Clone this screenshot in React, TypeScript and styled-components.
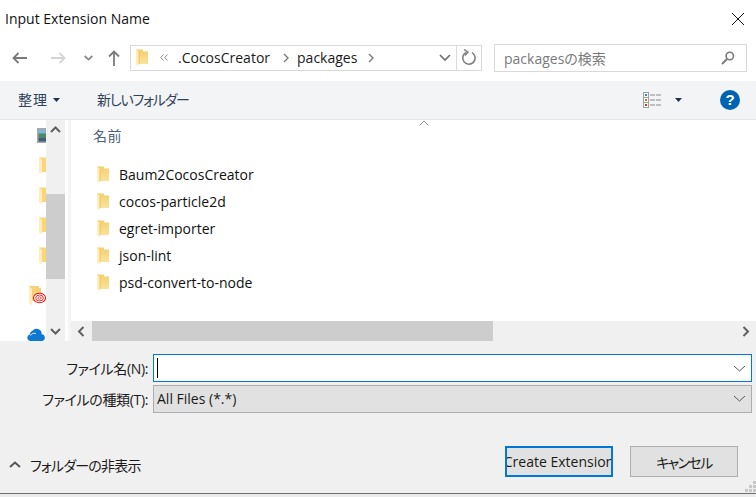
import React from "react";
import styled, { createGlobalStyle } from "styled-components";

const Global = createGlobalStyle`
  html, body { margin: 0; padding: 0; background: #fff; overflow: hidden; }
  * { box-sizing: border-box; }
  body { font-family: "Open Sans", "Noto Sans CJK JP", sans-serif; font-size: 14px; color: #1a1a1a; font-feature-settings: "palt"; }
`;

const Dialog = styled.div`
  width: 756px; height: 497px; display: flex; flex-direction: column; overflow: hidden; background: #fff; position: relative;
`;
const TitleBar = styled.div`
  height: 38px; flex: none; display: flex; align-items: center; justify-content: space-between; padding: 0 12px 0 5px;
`;
const Title = styled.span`
  font-size: 14px; color: #111; line-height: 38px;
`;
const NavRow = styled.div`
  height: 43px; flex: none; display: flex; align-items: center; padding: 0 9px 4px 12px;
`;
const NavIcon = styled.svg<{ $gap: number }>`
  flex: none; margin-right: ${(p) => p.$gap}px; display: block;
`;
const AddressBox = styled.div`
  width: 352px; height: 26px; flex: none; border: 1px solid #d9d9d9; display: flex; align-items: center; padding-left: 5px; margin-right: 12px;
`;
const Crumb = styled.span<{ $left: number }>`
  margin-left: ${(p) => p.$left}px; font-size: 14px; color: #1a1a1a; white-space: nowrap;
`;
const CrumbIcon = styled.svg<{ $left: number }>`
  margin-left: ${(p) => p.$left}px; flex: none; display: block;
`;
const Spacer = styled.div`
  flex: 1;
`;
const Divider = styled.div`
  width: 1px; align-self: stretch; background: #d9d9d9; margin: 0 4px 0 5px;
`;
const SearchBox = styled.div`
  width: 253px; height: 28px; flex: none; border: 1px solid #d9d9d9; display: flex; align-items: center; justify-content: space-between; padding: 0 11px 0 9px;
`;
const SearchText = styled.span`
  font-size: 14px; color: #7a7a7a;
`;
const Toolbar = styled.div`
  height: 39px; flex: none; background: #f3f4f6; border-bottom: 1px solid #e5e5e5; display: flex; align-items: center; padding: 0 16px 0 18px;
`;
const ToolLabel = styled.span<{ $right: number; $track: number }>`
  font-size: 14px; color: #2f4258; margin-right: ${(p) => p.$right}px; letter-spacing: ${(p) => p.$track}px; white-space: nowrap; padding-bottom: 2px;
`;
const HelpBadge = styled.span`
  width: 20px; height: 20px; border-radius: 50%; background: #0063b1; color: #fff; font-family: "Liberation Sans", sans-serif; font-weight: 700; font-size: 15px; line-height: 20px; text-align: center; flex: none;
`;
const Main = styled.div`
  flex: none; height: 221px; display: flex; position: relative;
`;
const Tree = styled.div`
  width: 46px; flex: none; overflow: hidden; display: flex; flex-direction: column; align-items: flex-end;
`;
const TreeRow = styled.div<{ $top?: number }>`
  height: 30px; flex: none; display: flex; align-items: center; margin-top: ${(p) => p.$top ?? 0}px; width: 100%; overflow: hidden;
`;
const VScroll = styled.div`
  width: 19px; flex: none; background: #f0f0f0; display: flex; flex-direction: column;
`;
const ScrollBtn = styled.div`
  height: 20px; flex: none; display: flex; align-items: center; justify-content: center;
`;
const VTrack = styled.div`
  flex: 1; padding-top: 54px;
`;
const VThumb = styled.div`
  height: 85px; background: #cdcdcd;
`;
const Splitter = styled.div`
  width: 6px; flex: none; background: #fff; border-right: 3px solid #f5f5f5;
`;
const ListPane = styled.div`
  flex: 1; display: flex; flex-direction: column; min-width: 0;
`;
const ListBody = styled.div`
  flex: 1; padding: 6px 0 0 22px;
`;
const ColumnHead = styled.div`
  font-size: 14px; color: #4c607a; height: 22px; line-height: 20px; margin-bottom: 13px; letter-spacing: 0.5px;
`;
const FileRow = styled.div`
  height: 27px; display: flex; align-items: center; padding-left: 4px; gap: 10px; font-size: 14px; color: #111;
`;
const HScroll = styled.div`
  height: 20px; flex: none; background: #f0f0f0; display: flex; align-items: center;
`;
const HBtn = styled.div`
  width: 21px; height: 20px; flex: none; display: flex; align-items: center; justify-content: center;
`;
const HThumb = styled.div`
  width: 401px; height: 20px; flex: none; background: #cdcdcd;
`;
const SortCaret = styled.svg`
  position: absolute; left: 419px; top: 0; display: block;
`;
const Footer = styled.div`
  height: 153px; flex: none; background: #f0f0f0; border-bottom: 1px solid #6d6d6d; padding: 13px 4px 0 0; display: flex; flex-direction: column; position: relative;
`;
const FieldRow = styled.div`
  height: 28px; display: flex; align-items: center; margin-bottom: 3px;
`;
const FieldLabel = styled.span`
  width: 148px; text-align: right; font-size: 14px; color: #1a1a1a; white-space: nowrap; margin-right: 5px; flex: none; padding-bottom: 1px; letter-spacing: -0.35px;
`;
const NameInput = styled.div`
  flex: 1; height: 28px; background: #fff; border: 1px solid #0078d7; display: flex; align-items: center; justify-content: space-between; padding: 0 5px 0 3px;
`;
const Caret = styled.div`
  width: 1px; height: 20px; background: #000;
`;
const TypeSelect = styled.div`
  flex: 1; height: 28px; background: #e1e1e1; border: 1px solid #adadad; display: flex; align-items: center; justify-content: space-between; padding: 0 5px 1px 3px; font-size: 14px;
`;
const ActionRow = styled.div`
  margin-top: 30px; display: flex; align-items: center; padding: 0 14px 0 9px;
`;
const Toggle = styled.div`
  display: flex; align-items: center; gap: 9px; font-size: 14px; padding-top: 6px; margin-right: auto; letter-spacing: -0.8px;
`;
const DlgButton = styled.div<{ $primary?: boolean; $track?: number }>`
  width: 108px; height: 31px; background: #e1e1e1; border: ${(p) => (p.$primary ? "2px solid #0078d7" : "1px solid #adadad")}; margin-left: 17px; overflow: hidden; display: flex; align-items: center; justify-content: center; white-space: nowrap; font-size: 14px; color: #1a1a1a; letter-spacing: ${(p) => p.$track ?? 0}px;
`;
const Grip = styled.svg`
  position: absolute; right: 0; bottom: 1px; display: block;
`;
const BottomEdge = styled.div`
  flex: 1; background: #ececec;
`;

const Folder = ({ w = 12, h = 17 }: { w?: number; h?: number }) => (
  <svg width={w} height={h} viewBox="0 0 12 17" style={{ flex: "none", display: "block" }}>
    <defs>
      <linearGradient id="fbody" x1="0" y1="0" x2="0" y2="1">
        <stop offset="0" stopColor="#f5cf6a" />
        <stop offset="1" stopColor="#fbe5a0" />
      </linearGradient>
    </defs>
    <path d="M0 0.5H7V2.5H12V15H3V17L0 15Z" fill="url(#fbody)" />
    <path d="M0 0.5L3 3V17L0 15Z" fill="#ffeebc" />
    <path d="M3 3V15" stroke="#e6bb58" strokeWidth="0.8" />
  </svg>
);

const SideFolder = () => (
  <svg width="7" height="17" viewBox="0 0 7 17" style={{ marginLeft: 39, flex: "none", display: "block" }}>
    <path d="M0 0.5H7V15H3V17L0 15Z" fill="#f8d778" />
    <path d="M0 0.5L3 3V17L0 15Z" fill="#ffeebc" />
  </svg>
);

const Chevron = ({ dir, color = "#606060" }: { dir: "up" | "down" | "left" | "right"; color?: string }) => {
  const d = { up: "M1 7L5.5 2.5L10 7", down: "M1 3L5.5 7.5L10 3", left: "M7.5 1L3 5.5L7.5 10", right: "M3.5 1L8 5.5L3.5 10" }[dir];
  return (
    <svg width="11" height="11" viewBox="0 0 11 11" style={{ display: "block" }}>
      <path d={d} fill="none" stroke={color} strokeWidth="2" />
    </svg>
  );
};

const ThinChevron = () => (
  <svg width="13" height="7" viewBox="0 0 13 7" style={{ display: "block" }}>
    <path d="M1 1L6.5 6L12 1" fill="none" stroke="#555" strokeWidth="1" />
  </svg>
);

const names = ["Baum2CocosCreator", "cocos-particle2d", "egret-importer", "json-lint", "psd-convert-to-node"];

export default function App() {
  return (
    <Dialog>
      <Global />
      <TitleBar>
        <Title>Input Extension Name</Title>
        <svg width="12" height="12" viewBox="0 0 12 12" style={{ display: "block" }}>
          <path d="M0 0L12 12M12 0L0 12" stroke="#111" strokeWidth="1" />
        </svg>
      </TitleBar>
      <NavRow>
        <NavIcon $gap={24} width="15" height="12" viewBox="0 0 15 12">
          <path d="M15 6H1.5M6.5 1L1.5 6L6.5 11" fill="none" stroke="#7a7a7a" strokeWidth="1.8" />
        </NavIcon>
        <NavIcon $gap={18} width="15" height="12" viewBox="0 0 15 12">
          <path d="M0 6H13.5M8.5 1L13.5 6L8.5 11" fill="none" stroke="#d4d4d4" strokeWidth="1.8" />
        </NavIcon>
        <NavIcon $gap={15} width="9" height="6" viewBox="0 0 9 6">
          <path d="M0.7 1L4.5 4.6L8.3 1" fill="none" stroke="#8a8a8a" strokeWidth="1.8" />
        </NavIcon>
        <NavIcon $gap={10} width="12" height="16" viewBox="0 0 12 16">
          <path d="M6 16V1.5M1 6.5L6 1.5L11 6.5" fill="none" stroke="#7a7a7a" strokeWidth="1.8" />
        </NavIcon>
        <AddressBox>
          <Folder />
          <CrumbIcon $left={12} width="8" height="7" viewBox="0 0 8 7">
            <path d="M3.5 0.5L0.8 3.5L3.5 6.5M7.5 0.5L4.8 3.5L7.5 6.5" fill="none" stroke="#8a8a8a" strokeWidth="1" />
          </CrumbIcon>
          <Crumb $left={10}>.CocosCreator</Crumb>
          <CrumbIcon $left={13} width="6" height="10" viewBox="0 0 6 10">
            <path d="M1 1L5 5L1 9" fill="none" stroke="#7a7a7a" strokeWidth="1.4" />
          </CrumbIcon>
          <Crumb $left={8}>packages</Crumb>
          <CrumbIcon $left={11} width="6" height="10" viewBox="0 0 6 10">
            <path d="M1 1L5 5L1 9" fill="none" stroke="#7a7a7a" strokeWidth="1.4" />
          </CrumbIcon>
          <Spacer />
          <svg width="12" height="7" viewBox="0 0 12 7" style={{ display: "block", flex: "none" }}>
            <path d="M1 1L6 6L11 1" fill="none" stroke="#707070" strokeWidth="1.7" />
          </svg>
          <Divider />
          <svg width="16" height="17" viewBox="0 0 16 17" style={{ display: "block", flex: "none", marginRight: 4 }}>
            <path d="M5.5 3.3A6.2 6.2 0 1 0 11 3.6" fill="none" stroke="#808080" strokeWidth="1.6" />
            <path d="M3 0.5L7 3.2L4 6.5" fill="none" stroke="#808080" strokeWidth="1.5" />
          </svg>
        </AddressBox>
        <SearchBox>
          <SearchText>packagesの検索</SearchText>
          <svg width="14" height="14" viewBox="0 0 14 14" style={{ display: "block" }}>
            <circle cx="8.8" cy="5" r="3.7" fill="none" stroke="#7a7a7a" strokeWidth="1.6" />
            <path d="M6 8L1 13" stroke="#7a7a7a" strokeWidth="2" />
          </svg>
        </SearchBox>
      </NavRow>
      <Toolbar>
        <ToolLabel $right={5} $track={1}>整理</ToolLabel>
        <svg width="7" height="4" viewBox="0 0 7 4" style={{ display: "block", marginRight: 37 }}>
          <path d="M0 0H7L3.5 4Z" fill="#1e3450" />
        </svg>
        <ToolLabel $right={0} $track={-1.2}>新しいフォルダー</ToolLabel>
        <Spacer />
        <svg width="18" height="16" viewBox="0 0 18 16" style={{ display: "block", marginRight: 14 }}>
          <rect x="0.5" y="0.5" width="5" height="15" fill="#fff" stroke="#a0a0a0" />
          <path d="M0.5 5.5H5.5M0.5 10.5H5.5" stroke="#a0a0a0" />
          <rect x="2" y="2" width="2" height="2" fill="#3f7fc4" />
          <rect x="2" y="7" width="2" height="2" fill="#9a8a2a" />
          <rect x="2" y="12" width="2" height="2" fill="#c0392b" />
          <path d="M7 3H12M13 3H18M7 8H12M13 8H18M7 13H12M13 13H18" stroke="#8a8a8a" />
        </svg>
        <svg width="7" height="4" viewBox="0 0 7 4" style={{ display: "block", marginRight: 38 }}>
          <path d="M0 0H7L3.5 4Z" fill="#1e3450" />
        </svg>
        <HelpBadge>?</HelpBadge>
      </Toolbar>
      <Main>
        <Tree>
          <TreeRow>
            <svg width="9" height="15" viewBox="0 0 9 15" style={{ marginLeft: 37, flex: "none", display: "block" }}>
              <rect x="0" y="0" width="9" height="15" fill="#a8a8a8" />
              <rect x="1.5" y="1.5" width="7.5" height="4" fill="#7fb4dc" />
              <rect x="1.5" y="5.5" width="7.5" height="4" fill="#4d8a5e" />
              <rect x="1.5" y="9.5" width="7.5" height="4" fill="#3d5f7a" />
            </svg>
          </TreeRow>
          <TreeRow><SideFolder /></TreeRow>
          <TreeRow><SideFolder /></TreeRow>
          <TreeRow><SideFolder /></TreeRow>
          <TreeRow><SideFolder /></TreeRow>
          <TreeRow $top={11}>
            <svg width="17" height="20" viewBox="0 0 17 20" style={{ marginLeft: 29, flex: "none", display: "block" }}>
              <path d="M0 0H10V2H12V15H3V19L0 16Z" fill="#f5d27a" />
              <path d="M0 0L3 3V19L0 16Z" fill="#ffeebc" />
              <ellipse cx="10.5" cy="12" rx="6" ry="4.7" fill="#fff" stroke="#e0201a" strokeWidth="1.1" />
              <ellipse cx="10.5" cy="12" rx="3.8" ry="3" fill="none" stroke="#e0201a" strokeWidth="0.9" />
              <ellipse cx="10.5" cy="12" rx="1.6" ry="1.3" fill="none" stroke="#e0201a" strokeWidth="0.8" />
            </svg>
          </TreeRow>
          <TreeRow $top={8}>
            <svg width="19" height="14" viewBox="0 0 19 14" style={{ marginLeft: 27, flex: "none", display: "block" }}>
              <path d="M3.5 14A3.4 3.4 0 0 1 2.6 7.4A5.6 5.6 0 0 1 6 3.2A5.6 5.6 0 0 1 13.6 3.4A4.9 4.9 0 0 1 14.6 7.2A3.5 3.5 0 0 1 15.5 14Z" fill="#0f78d4" />
              <path d="M3 8.5Q6 5 9 6.5" fill="none" stroke="#fff" strokeWidth="0.8" />
            </svg>
          </TreeRow>
        </Tree>
        <VScroll>
          <ScrollBtn><Chevron dir="up" /></ScrollBtn>
          <VTrack><VThumb /></VTrack>
          <ScrollBtn><Chevron dir="down" /></ScrollBtn>
        </VScroll>
        <Splitter />
        <ListPane>
          <ListBody>
            <ColumnHead>名前</ColumnHead>
            {names.map((n) => (
              <FileRow key={n}>
                <Folder />
                <span>{n}</span>
              </FileRow>
            ))}
          </ListBody>
          <HScroll>
            <HBtn><Chevron dir="left" /></HBtn>
            <HThumb />
            <Spacer />
            <HBtn><Chevron dir="right" /></HBtn>
          </HScroll>
        </ListPane>
        <SortCaret width="10" height="6" viewBox="0 0 10 6">
          <path d="M0.5 5.5L5 1L9.5 5.5" fill="none" stroke="#8a8a8a" strokeWidth="1" />
        </SortCaret>
      </Main>
      <Footer>
        <FieldRow>
          <FieldLabel>ファイル名(N):</FieldLabel>
          <NameInput>
            <Caret />
            <ThinChevron />
          </NameInput>
        </FieldRow>
        <FieldRow>
          <FieldLabel>ファイルの種類(T):</FieldLabel>
          <TypeSelect>
            <span>All Files (*.*)</span>
            <ThinChevron />
          </TypeSelect>
        </FieldRow>
        <ActionRow>
          <Toggle>
            <svg width="12" height="7" viewBox="0 0 12 7" style={{ display: "block" }}>
              <path d="M1 6L6 1.5L11 6" fill="none" stroke="#555" strokeWidth="2" />
            </svg>
            <span>フォルダーの非表示</span>
          </Toggle>
          <DlgButton $primary>Create Extension</DlgButton>
          <DlgButton $track={-1.6}>キャンセル</DlgButton>
        </ActionRow>
        <Grip width="11" height="11" viewBox="0 0 11 11">
          <path d="M8 0h3v3H8zM4 4h3v3H4zM8 4h3v3H8zM0 8h3v3H0zM4 8h3v3H4zM8 8h3v3H8z" fill="#c8c8c8" />
        </Grip>
      </Footer>
      <BottomEdge />
    </Dialog>
  );
}
